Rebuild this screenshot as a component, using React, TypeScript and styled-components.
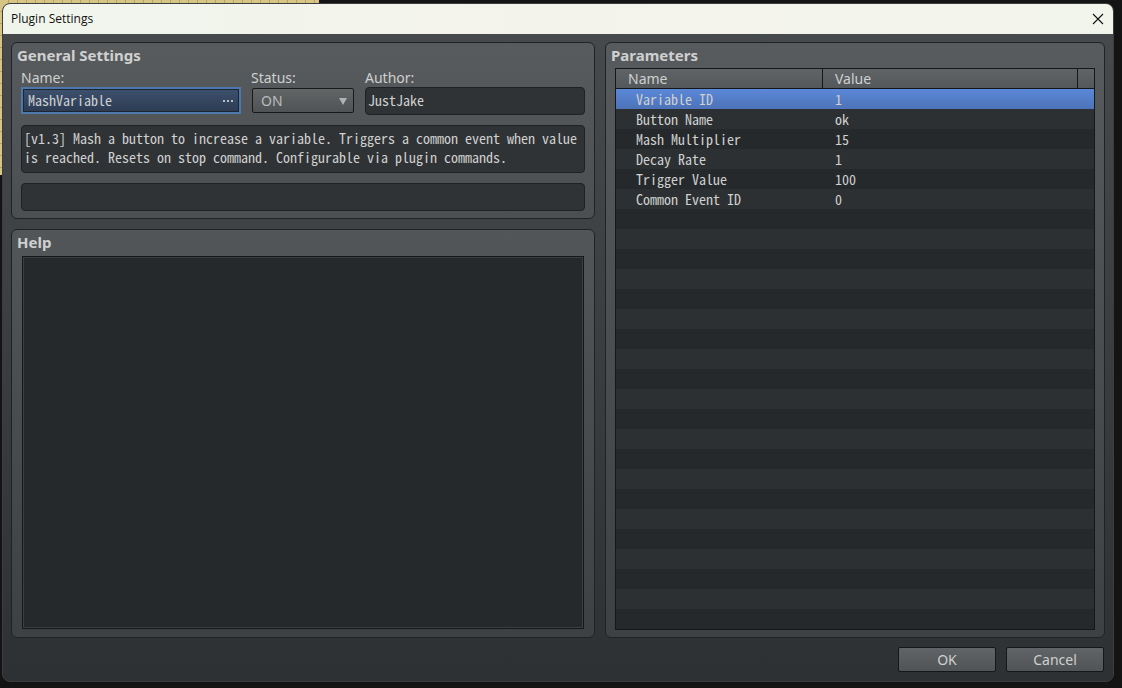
import React from "react";
import styled, { createGlobalStyle } from "styled-components";

const ui = `"Noto Sans", "Open Sans", sans-serif`;
const mono = `"Noto Sans Mono CJK JP", "Noto Sans CJK JP", monospace`;
const ink = "#cfd0d0";

const GlobalStyle = createGlobalStyle`
  *, *::before, *::after { box-sizing: border-box; }
  body { margin: 0; background: #141414; color: ${ink}; font: 14px/20px ${ui}; }
  button, input, select, textarea { font: inherit; color: inherit; margin: 0; }
`;

const Desktop = styled.div`
  min-height: 100vh;
  display: flex;
  padding: 3px 8px 6px 2px;
  background:
    repeating-linear-gradient(90deg, transparent 0 8px, #b3a26a 8px 9px) 0 0 / 319px 3px no-repeat,
    repeating-linear-gradient(transparent 0 11px, #b3a26a 11px 12px) 0 0 / 3px 175px no-repeat,
    linear-gradient(#d6c583, #d6c583) 0 0 / 319px 175px no-repeat,
    #141414;
`;

const Dialog = styled.section`
  flex: 1;
  display: flex;
  flex-direction: column;
  border: 1px solid #3b3d3e;
  border-radius: 8px;
  overflow: hidden;
  background: linear-gradient(#484b4d, #2e3133);
`;

const TitleBar = styled.header`
  display: flex;
  align-items: center;
  justify-content: space-between;
  height: 30px;
  padding: 0 8px;
  color: #111;
  background: linear-gradient(90deg, #f0f5ec, #f4f3eb 50%, #f2f5ec);
`;

const WindowTitle = styled.h1`
  margin: 0;
  font: 12px/20px "Open Sans", "Noto Sans", sans-serif;
`;

const CloseButton = styled.button`
  display: flex;
  padding: 0;
  border: 0;
  background: none;
`;

const Content = styled.main`
  flex: 1;
  display: grid;
  grid-template-columns: 584fr 500fr;
  gap: 10px;
  padding: 8px 8px 0;
`;

const Column = styled.div`
  display: flex;
  flex-direction: column;
  gap: 10px;
  min-width: 0;
`;

const Panel = styled.section<{ $grow?: boolean; $from: string; $to: string }>`
  flex: ${(p) => (p.$grow ? "1" : "none")};
  display: flex;
  flex-direction: column;
  padding: 0 9px 7px;
  border: 1px solid #202325;
  border-radius: 6px;
  background: linear-gradient(${(p) => p.$from}, ${(p) => p.$to});
`;

const PanelTitle = styled.h2`
  margin: 0 -4px;
  font: bold 15px/25px ${ui};
`;

const Fields = styled.div`
  display: grid;
  grid-template-columns: 220fr 104fr 220fr;
  gap: 10px;
`;

const Field = styled.div`
  display: flex;
  flex-direction: column;
  min-width: 0;
`;

const Label = styled.label`
  line-height: 20px;
  height: 19px;
`;

const NameBox = styled.div`
  display: flex;
  align-items: center;
  height: 27px;
  padding: 0 5px;
  border: 2px solid #4c78ad;
  box-shadow: inset 0 0 0 1px #1c2530;
  background: linear-gradient(#3d516e, #2c3b52);
`;

const NameInput = styled.input`
  flex: 1;
  min-width: 0;
  height: 23px;
  padding: 0 0 2px;
  border: 0;
  outline: 0;
  background: none;
  font: 14px/20px ${mono};
`;

const MoreButton = styled.button`
  display: flex;
  padding: 0;
  border: 0;
  background: none;
`;

const SelectBox = styled.div`
  display: grid;
  align-items: center;
  margin: 1px;
  height: 25px;
  border: 1px solid #17191b;
  border-radius: 2px;
  background: linear-gradient(#616566, #4f5355);

  > * { grid-area: 1 / 1; }
  > svg { justify-self: end; margin-right: 6px; pointer-events: none; }
`;

const Select = styled.select`
  appearance: none;
  width: 100%;
  height: 23px;
  padding: 0 8px;
  border: 0;
  outline: 0;
  background: none;
  color: #babcbc;
`;

const wellBorder = `
  border: 1px solid #1f2224;
  border-radius: 4px;
  outline: 0;
  background: #2f3335;
`;

const TextInput = styled.input`
  width: 100%;
  height: 28px;
  padding: 0 2px 2px;
  ${wellBorder}
  font: 14px/20px ${mono};
`;

const Stack = styled.div`
  display: flex;
  flex-direction: column;
  gap: 10px;
`;

const Description = styled.textarea`
  display: block;
  width: 100%;
  height: 48px;
  padding: 3px 2px;
  resize: none;
  overflow: hidden;
  ${wellBorder}
  font: 14px/19px ${mono};
`;

const HelpText = styled.textarea`
  flex: 1;
  margin: 1px;
  padding: 4px;
  resize: none;
  outline: 0;
  border: 1px solid #15181a;
  border-radius: 0;
  box-shadow: inset 0 0 0 1px #3b3f41;
  background: #25292b;
  font: 14px/19px ${mono};
`;

const TableWell = styled.div`
  flex: 1;
  border: 1px solid #15181a;
  background: repeating-linear-gradient(#25292b 0 20px, #2c3032 20px 40px) 0 20px;
`;

const Table = styled.table`
  width: 100%;
  table-layout: fixed;
  border-collapse: separate;
  border-spacing: 0;
`;

const HeadCell = styled.th<{ $width?: string }>`
  width: ${(p) => p.$width ?? "auto"};
  height: 20px;
  padding: 0 0 0 12px;
  border: solid #15181a;
  border-width: 0 1px 1px 0;
  text-align: left;
  font: 14px/19px ${ui};
  background: linear-gradient(#606466, #54585a);
`;

const HeadFiller = styled.td`
  width: 16px;
  padding: 0;
  border-bottom: 1px solid #15181a;
  background: linear-gradient(#606466, #54585a);
`;

const Row = styled.tr<{ $selected: boolean }>`
  background: ${(p) => (p.$selected ? "linear-gradient(#5b88d8, #4d73b8)" : "none")};
`;

const Cell = styled.td<{ $indent?: boolean }>`
  height: 20px;
  padding: 0 0 0 ${(p) => (p.$indent ? "20px" : "12px")};
  font: 14px/20px ${mono};
  white-space: nowrap;
`;

const Footer = styled.footer`
  display: flex;
  justify-content: flex-end;
  gap: 10px;
  padding: 9px;
`;

const PushButton = styled.button`
  width: 98px;
  height: 25px;
  padding: 0;
  border: 1px solid #15181a;
  border-radius: 2px;
  background: linear-gradient(#606466, #505456);
`;

const parameters = [
  ["Variable ID", "1"],
  ["Button Name", "ok"],
  ["Mash Multiplier", "15"],
  ["Decay Rate", "1"],
  ["Trigger Value", "100"],
  ["Common Event ID", "0"],
];

const description =
  "[v1.3] Mash a button to increase a variable. Triggers a common event when value is reached. Resets on stop command. Configurable via plugin commands.";

export default function App() {
  const [selected, setSelected] = React.useState(0);
  return (
    <>
      <GlobalStyle />
      <Desktop>
        <Dialog role="dialog" aria-labelledby="window-title">
          <TitleBar>
            <WindowTitle id="window-title">Plugin Settings</WindowTitle>
            <CloseButton type="button" aria-label="Close">
              <svg width="14" height="14" viewBox="0 0 14 14" stroke="#111" strokeWidth="1.1">
                <path d="M2 2 12 12M12 2 2 12" />
              </svg>
            </CloseButton>
          </TitleBar>
          <Content>
            <Column>
              <Panel $from="#585b5d" $to="#4c4f51">
                <PanelTitle>General Settings</PanelTitle>
                <Stack>
                  <Fields>
                    <Field>
                      <Label htmlFor="name">Name:</Label>
                      <NameBox>
                        <NameInput id="name" defaultValue="MashVariable" />
                        <MoreButton type="button" aria-label="Choose plugin">
                          <svg width="12" height="4" viewBox="0 0 12 4" fill="#b9bfc8">
                            <path d="M1 1h2v2H1zM5 1h2v2H5zM9 1h2v2H9z" />
                          </svg>
                        </MoreButton>
                      </NameBox>
                    </Field>
                    <Field>
                      <Label htmlFor="status">Status:</Label>
                      <SelectBox>
                        <Select id="status" defaultValue="ON">
                          <option>ON</option>
                          <option>OFF</option>
                        </Select>
                        <svg width="8" height="8" viewBox="0 0 8 8" fill="#b0b2b3">
                          <path d="M0 1h8L4 8z" />
                        </svg>
                      </SelectBox>
                    </Field>
                    <Field>
                      <Label htmlFor="author">Author:</Label>
                      <TextInput id="author" readOnly value="JustJake" />
                    </Field>
                  </Fields>
                  <Description aria-label="Description" readOnly value={description} />
                  <TextInput aria-label="Link" readOnly value="" />
                </Stack>
              </Panel>
              <Panel $grow $from="#535658" $to="#3d4142">
                <PanelTitle id="help-title">Help</PanelTitle>
                <HelpText aria-labelledby="help-title" readOnly value="" />
              </Panel>
            </Column>
            <Panel $grow $from="#585b5d" $to="#3d4142">
              <PanelTitle>Parameters</PanelTitle>
              <TableWell>
                <Table>
                  <thead>
                    <tr>
                      <HeadCell $width="207px">Name</HeadCell>
                      <HeadCell>Value</HeadCell>
                      <HeadFiller />
                    </tr>
                  </thead>
                  <tbody>
                    {parameters.map(([name, value], i) => (
                      <Row key={name} $selected={i === selected} onClick={() => setSelected(i)}>
                        <Cell $indent>{name}</Cell>
                        <Cell colSpan={2}>{value}</Cell>
                      </Row>
                    ))}
                  </tbody>
                </Table>
              </TableWell>
            </Panel>
          </Content>
          <Footer>
            <PushButton type="button">OK</PushButton>
            <PushButton type="button">Cancel</PushButton>
          </Footer>
        </Dialog>
      </Desktop>
    </>
  );
}
